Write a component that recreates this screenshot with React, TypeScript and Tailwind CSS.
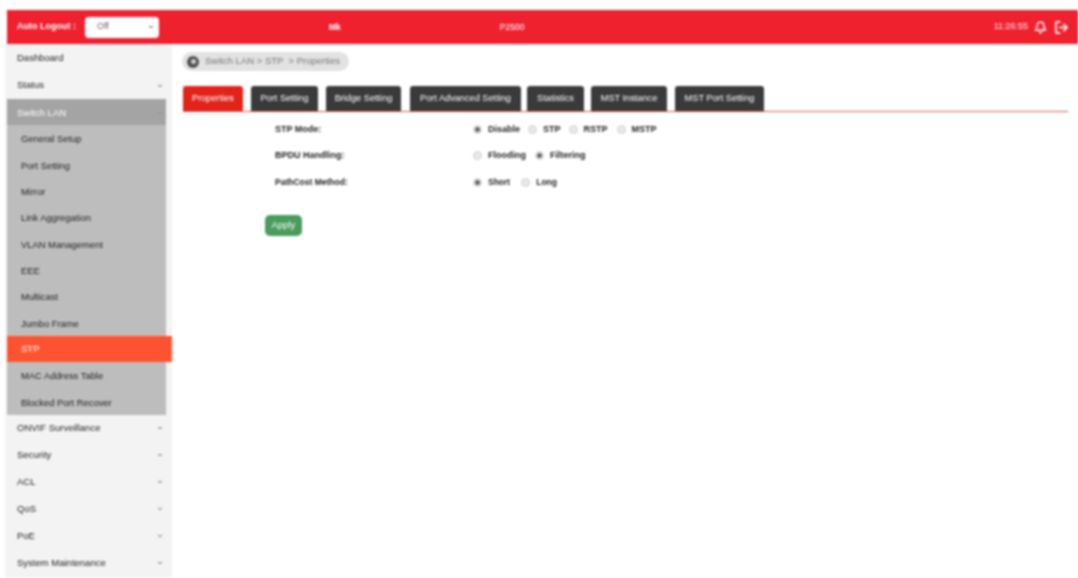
import { Bell, ChevronDown, LogOut } from 'lucide-react'

const TOP_MENU = ['Dashboard', 'Status']
const SUB_MENU = ['General Setup', 'Port Setting', 'Mirror', 'Link Aggregation', 'VLAN Management', 'EEE', 'Multicast', 'Jumbo Frame']
const SUB_MENU_END = ['MAC Address Table', 'Blocked Port Recover']
const BOTTOM_MENU = ['ONVIF Surveillance', 'Security', 'ACL', 'QoS', 'PoE', 'System Maintenance']

const TABS = [
  { label: 'Properties', w: 'w-[60px]', gap: 'mr-2', active: true },
  { label: 'Port Setting', w: 'w-[67px]', gap: 'mr-2' },
  { label: 'Bridge Setting', w: 'w-[75px]', gap: 'mr-[9px]' },
  { label: 'Port Advanced Setting', w: 'w-[111px]', gap: 'mr-[6px]' },
  { label: 'Statistics', w: 'w-[57px]', gap: 'mr-[7px]' },
  { label: 'MST Instance', w: 'w-[76px]', gap: 'mr-2' },
  { label: 'MST Port Setting', w: 'w-[89px]', gap: '' },
]

function MenuRow({ label, arrow }: { label: string; arrow?: boolean }) {
  return (
    <div className="flex h-[27px] items-center justify-between pl-[10px] pr-[3px] text-[9.5px] text-[#222]">
      <span>{label}</span>
      {arrow && <ChevronDown size={6} strokeWidth={4} className="text-[#555]" />}
    </div>
  )
}

function SubRow({ label }: { label: string }) {
  return <div className="flex h-[26.4px] items-center pl-[14px] pt-[2px] text-[9.4px] text-[#222]">{label}</div>
}

function Radio({ label, checked, gap }: { label: string; checked?: boolean; gap: string }) {
  return (
    <span className={`flex items-center gap-[6px] ${gap}`}>
      <span className="flex h-[9px] w-[9px] items-center justify-center rounded-full border border-[#d0d0d0] bg-[#e8e8e8]">
        {checked && <span className="h-[5px] w-[5px] rounded-full bg-[#666]" />}
      </span>
      <span>{label}</span>
    </span>
  )
}

function FormRow({ label, small, children }: { label: string; small?: boolean; children: React.ReactNode }) {
  return (
    <div className={`flex h-[26.5px] items-center font-bold text-[#222] ${small ? 'text-[8.5px]' : 'text-[9px]'}`}>
      <div className="w-[208px] pl-[10px]">{label}</div>
      <div className="flex items-center">{children}</div>
    </div>
  )
}

export default function App() {
  return (
    <div className="h-[578px] w-[1078px] overflow-hidden bg-white pt-[10px] font-['Liberation_Sans',Arial,sans-serif] blur-[0.8px]">
      {/* Top bar */}
      <header className="ml-[7px] flex h-[34px] items-center bg-[#f0212f] text-white">
        <span className="ml-[10px] text-[9px] font-bold text-white">Auto Logout :</span>
        <div className="ml-[9px] flex h-[21px] w-[74px] items-center justify-between rounded-sm bg-white pl-[12px] pr-[5px] text-[9px] text-[#666]">
          <span>Off</span>
          <ChevronDown size={6} strokeWidth={4} className="text-[#333]" />
        </div>
        <span className="ml-[170px] text-[8.5px] font-bold text-white">Mk</span>
        <span className="ml-[159px] text-[8.5px] text-white">P2500</span>
        <span className="ml-auto text-[9px] text-[#ffe4e4]">11:26:55</span>
        <Bell size={13} strokeWidth={2.5} className="ml-[6px] text-white" />
        <LogOut size={15} strokeWidth={2.5} className="ml-[7px] mr-[9px] text-white" />
      </header>

      <div className="flex h-[534px]">
        {/* Sidebar */}
        <aside className="ml-[5px] w-[167px] shrink-0 bg-[#f3f3f3]">
          <div className="pl-[2px] pr-[6px] pt-[1px]">
            {TOP_MENU.map((m, i) => (
              <MenuRow key={m} label={m} arrow={i === 1} />
            ))}
          </div>
          <div className="ml-[2px]">
            <div className="mr-[6px] flex h-[26px] items-center justify-between bg-[#a4a4a4] pl-[10px] pr-[3px] pt-[2px] text-[9.5px] text-white">
              <span>Switch LAN</span>
              <ChevronDown size={6} strokeWidth={4} className="text-[#8a8a8a]" />
            </div>
            <div className="mr-[6px] bg-[#bdbdbd]">
              {SUB_MENU.map((m) => (
                <SubRow key={m} label={m} />
              ))}
            </div>
            <div className="flex h-[26px] items-center bg-[#ff5230] pl-[14px] text-[9.5px] text-white">STP</div>
            <div className="mr-[6px] bg-[#bdbdbd]">
              {SUB_MENU_END.map((m) => (
                <SubRow key={m} label={m} />
              ))}
            </div>
          </div>
          <div className="pl-[2px] pr-[6px]">
            {BOTTOM_MENU.map((m) => (
              <MenuRow key={m} label={m} arrow />
            ))}
          </div>
        </aside>

        {/* Content */}
        <main className="min-w-0 flex-1 pl-[11px] pr-[10px] pt-[8px]">
          <div className="-ml-px flex h-[19px] w-[167px] items-center rounded-full bg-[#e2e2e2] pl-[5px] text-[9.5px] text-[#777]">
            <span className="flex h-[12px] w-[12px] items-center justify-center rounded-full bg-[#4f4f4f]">
              <span className="h-[5px] w-[5px] rounded-full bg-[#cfcfcf]" />
            </span>
            <span className="ml-[6px]">Switch LAN &gt; STP &nbsp;&gt; Properties</span>
          </div>

          <div className="mt-[15px] flex border-b border-[#e0574c]">
            {TABS.map((t) => (
              <div
                key={t.label}
                className={`flex h-[25px] items-center justify-center rounded-t-[3px] text-[9.2px] ${t.w} ${t.gap} ${
                  t.active ? 'bg-[#e2231a] text-white' : 'bg-[#3a3a3a] text-white'
                }`}
              >
                {t.label}
              </div>
            ))}
          </div>

          <div className="mt-[4px] pl-[82px]">
            <FormRow label="STP Mode:">
              <Radio label="Disable" checked gap="mr-[8px]" />
              <Radio label="STP" gap="mr-[8px]" />
              <Radio label="RSTP" gap="mr-[9px]" />
              <Radio label="MSTP" gap="" />
            </FormRow>
            <FormRow label="BPDU Handling:">
              <Radio label="Flooding" gap="mr-[9px]" />
              <Radio label="Filtering" checked gap="" />
            </FormRow>
            <FormRow label="PathCost Method:" small>
              <Radio label="Short" checked gap="mr-[11px]" />
              <Radio label="Long" gap="" />
            </FormRow>
          </div>

          <button className="ml-[82px] mt-[19px] flex h-[21px] w-[37px] items-center justify-center rounded-[5px] bg-[#4a9c5d] text-[9.5px] text-white">
            Apply
          </button>
        </main>
      </div>
    </div>
  )
}
